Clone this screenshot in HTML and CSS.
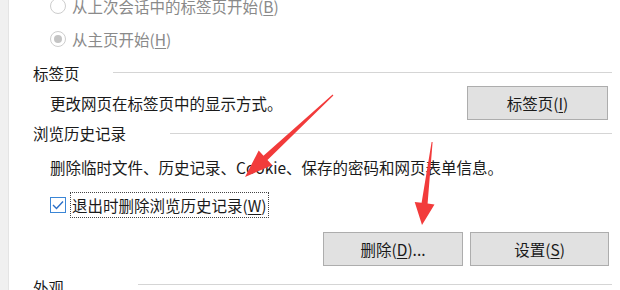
FILE: index.html
```html
<!DOCTYPE html>
<html lang="zh-CN">
<head>
    <meta charset="UTF-8">
    <title>Internet 选项</title>
    <link rel="stylesheet" href="styles.css">
</head>
<body>
    <div class="side"></div>
    <div class="panel">
        <div class="radio-row first">
            <span class="radio"></span>
            <span>从上次会话中的标签页开始(<u>B</u>)</span>
        </div>
        <div class="radio-row home">
            <span class="radio on"></span>
            <span>从主页开始(<u>H</u>)</span>
        </div>

        <div class="group-head tabs-head">
            <span class="group-title">标签页</span>
            <span class="line"></span>
        </div>
        <div class="tab-row">
            <span>更改网页在标签页中的显示方式。</span>
            <button class="btn btn-tabs">标签页(<u>I</u>)</button>
        </div>

        <div class="group-head history-head">
            <span class="group-title">浏览历史记录</span>
            <span class="line"></span>
        </div>
        <div class="desc-row">删除临时文件、历史记录、Cookie、保存的密码和网页表单信息。</div>
        <div class="check-row">
            <span class="checkbox">
                <svg width="12" height="10" viewBox="0 0 12 10"><path d="M1 5 L4.5 8.5 L11 1.5" fill="none" stroke="#2b6fc7" stroke-width="1.4"/></svg>
            </span>
            <span class="focus">退出时删除浏览历史记录(<u>W</u>)</span>
        </div>
        <div class="btn-row">
            <button class="btn btn-delete">删除(<u>D</u>)...</button>
            <button class="btn btn-settings">设置(<u>S</u>)</button>
        </div>

        <div class="group-head look-head">
            <span class="group-title">外观</span>
            <span class="line"></span>
        </div>
    </div>

    <!-- red annotation arrows drawn over the dialog -->
    <svg class="arrows" width="620" height="290" viewBox="0 0 620 290">
        <polygon points="333.4,95.4 267.5,160.1 272.3,165.2 245,177 258.7,150.6 263.5,155.7 332.6,94.6" fill="#f23b3b"/>
        <polygon points="432.6,142 427.6,203.6 434.5,204.4 422,225 414.7,202 421.6,202.8 431.6,142" fill="#f23b3b"/>
    </svg>
</body>
</html>
```

FILE: styles.css
```css
/* Global */
* {
    margin: 0;
    padding: 0;
    box-sizing: border-box;
}
body {
    display: flex;
    width: 620px;
    height: 290px;
    overflow: hidden;
    background: #ffffff;
    font-family: "Noto Sans CJK SC", "Microsoft YaHei", sans-serif;
    font-size: 15.5px;
    color: #1a1a1a;
    position: relative;
}
u {
    text-decoration: underline;
    text-underline-offset: 2px;
}

/* Left strip */
.side {
    width: 9px;
    background: #f0f0f0;
    border-right: 1px solid #e4e4e4;
}
.panel {
    flex: 1;
    padding: 0 8px 0 24px;
}

/* Radio options (disabled) */
.radio-row {
    display: flex;
    align-items: center;
    height: 32px;
    padding-left: 17px;
    color: #8a8a8a;
}
.radio-row.first {
    margin-top: -10px;
}
.radio-row.home {
    height: 34px;
}
.radio {
    width: 16px;
    height: 16px;
    margin-right: 6px;
    border: 1px solid #cdcdcd;
    border-radius: 50%;
    display: flex;
    align-items: center;
    justify-content: center;
}
.radio.on::after {
    content: "";
    width: 8px;
    height: 8px;
    border-radius: 50%;
    background: #c4c4c4;
}

/* Group headings */
.group-head {
    display: flex;
    align-items: center;
}
.group-head .line {
    flex: 1;
    height: 1px;
    background: #d5d5d5;
}
.tabs-head {
    height: 27px;
    margin-top: 3px;
}
.tabs-head .group-title {
    width: 80px;
}
.history-head {
    height: 26px;
}
.history-head .group-title {
    width: 137px;
}
.look-head {
    height: 34px;
    margin-top: 4px;
}
.look-head .group-title {
    width: 105px;
}
.look-head .line {
    margin-bottom: 6px;
}

/* Rows */
.tab-row {
    display: flex;
    align-items: center;
    justify-content: space-between;
    height: 34px;
    padding: 0 4px 0 17px;
}
.desc-row {
    height: 42px;
    line-height: 42px;
    padding-left: 17px;
}
.check-row {
    display: flex;
    align-items: center;
    height: 34px;
    padding-left: 17px;
}
.checkbox {
    width: 16px;
    height: 16px;
    margin-right: 5px;
    border: 1px solid #3b86d6;
    display: flex;
    align-items: center;
    justify-content: center;
}
.focus {
    outline: 1px dotted #444;
    padding: 1px 1px;
}
.btn-row {
    display: flex;
    justify-content: flex-end;
    gap: 7px;
    padding: 10px 3px 0 0;
}

/* Buttons */
.btn {
    height: 34px;
    background: #e1e1e1;
    border: 1px solid #adadad;
    font-family: inherit;
    font-size: 15.5px;
    color: #1a1a1a;
}
.btn-tabs {
    width: 141px;
}
.btn-delete {
    width: 140px;
}
.btn-settings {
    width: 139px;
}

/* Annotation overlay */
.arrows {
    position: absolute;
    left: 0;
    top: 0;
    pointer-events: none;
}
```
